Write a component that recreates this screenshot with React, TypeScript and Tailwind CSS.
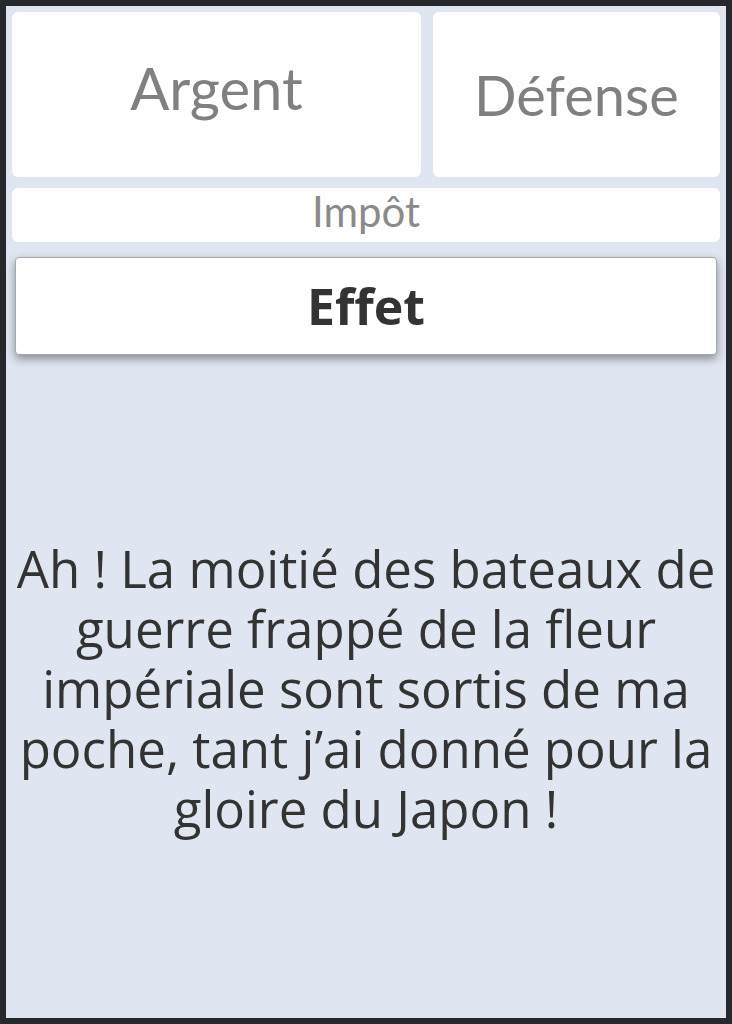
export default function App() {
  return (
    <div className="h-screen w-full bg-[#27282c] p-[6px]">
      <div className="flex h-full flex-col bg-[#e0e6f1] p-[6px]">
        {/* Stats row */}
        <div className="flex h-[165px] gap-[12px]">
          <div className="flex w-[409px] items-center justify-center rounded-md bg-white pb-[14px]">
            <span className="font-['Lato',sans-serif] text-[58px] text-[#808080]">Argent</span>
          </div>
          <div className="flex flex-1 items-center justify-center rounded-md bg-white">
            <span className="font-['Lato',sans-serif] text-[56px] text-[#808080]">Défense</span>
          </div>
        </div>

        <div className="mt-[11px] flex h-[54px] items-center justify-center rounded-md bg-white pb-[9px]">
          <span className="font-['Lato',sans-serif] text-[42px] leading-none text-[#8a8a8a]">Impôt</span>
        </div>

        {/* Effect card */}
        <div className="mx-[3px] mt-[15px] flex h-[98px] items-center justify-center rounded-sm border border-[#a3a7ae] bg-white shadow-[0_4px_10px_rgba(0,0,0,0.4)]">
          <span className="font-['Open_Sans',sans-serif] text-[50px] font-bold text-[#333333]">Effet</span>
        </div>

        <div className="flex flex-1 items-center justify-center px-[2px] pt-[9px] text-center">
          <p className="font-['Open_Sans',sans-serif] text-[51px] leading-[60px] text-[#333333]">
            Ah ! La moitié des bateaux de guerre frappé de la fleur impériale sont sortis de ma poche, tant j’ai donné pour la gloire du Japon !
          </p>
        </div>
      </div>
    </div>
  );
}
